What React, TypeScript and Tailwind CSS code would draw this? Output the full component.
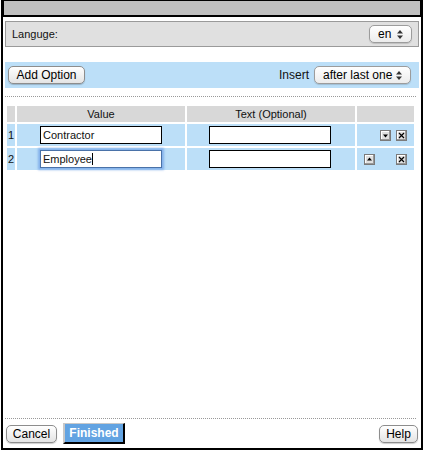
import React from 'react';

const font = { fontFamily: '"Liberation Sans", Arial, sans-serif' };

const Arrows: React.FC = () => (
  <svg width="6" height="9" viewBox="0 0 6 9" className="shrink-0">
    <path d="M3 0 L6 3.5 L0 3.5 Z" fill="#333" />
    <path d="M3 9 L6 5.5 L0 5.5 Z" fill="#333" />
  </svg>
);

const Select: React.FC<{ value: string; className?: string }> = ({ value, className }) => (
  <div
    className={`flex items-center justify-between h-[18px] px-[8px] rounded-[5px] border border-[#9c9c9c] bg-gradient-to-b from-white to-[#ececec] shadow-[0_1px_1px_rgba(0,0,0,0.15)] text-[12px] text-black ${className ?? ''}`}
  >
    <span>{value}</span>
    <Arrows />
  </div>
);

const MacButton: React.FC<{ label: string; className?: string }> = ({ label, className }) => (
  <button
    className={`h-[18px] rounded-[5px] border border-[#8d8d8d] bg-gradient-to-b from-white to-[#e4e4e4] shadow-[0_1px_1px_rgba(0,0,0,0.2)] text-[12px] text-black leading-none ${className ?? ''}`}
  >
    {label}
  </button>
);

const SmallBtn: React.FC<{ kind: 'up' | 'down' | 'x' }> = ({ kind }) => (
  <div className="w-[11px] h-[11px] border border-[#7a7a7a] bg-[#e0e0e0] shadow-[inset_-1px_-1px_0_#9a9a9a,inset_1px_1px_0_#fff] flex items-center justify-center">
    <svg width="7" height="7" viewBox="0 0 7 7">
      {kind === 'up' && <path d="M3.5 1.5 L6 4.5 L1 4.5 Z" fill="#000" />}
      {kind === 'down' && <path d="M1 2.5 L6 2.5 L3.5 5.5 Z" fill="#000" />}
      {kind === 'x' && <path d="M1 1 L6 6 M6 1 L1 6" stroke="#000" strokeWidth="1.2" />}
    </svg>
  </div>
);

const rows = [
  { n: 1, value: 'Contractor', up: false, down: true, focus: false },
  { n: 2, value: 'Employee', up: true, down: false, focus: true },
];

export default function App() {
  return (
    <div className="w-[424px] h-[451px] bg-white text-[#111]" style={font}>
      <div className="ml-[1px] w-[422px] h-[450px] border-x-2 border-b-2 border-black flex flex-col">
        {/* title bar */}
        <div className="h-[17px] bg-[#c0c0c0] border border-black border-b-2" />

        {/* language */}
        <div className="mt-[4px] mx-[2px] h-[26px] bg-[#e0e0e0] border border-[#9a9a9a] flex items-center justify-between pl-[6px] pr-[6px]">
          <span className="text-[11px]">Languge:</span>
          <Select value="en" className="w-[43px]" />
        </div>

        {/* add option row */}
        <div className="mt-[15px] mx-[2px] h-[26px] bg-[#bcdff8] flex items-center justify-between pl-[3px] pr-[8px]">
          <MacButton label="Add Option" className="w-[77px]" />
          <div className="flex items-center gap-[5px]">
            <span className="text-[12px]">Insert</span>
            <Select value="after last one" className="w-[97px]" />
          </div>
        </div>

        <div className="mt-[8px] ml-[2px] mr-[5px] border-t border-dotted border-[#999]" />

        {/* table */}
        <div className="mt-[9px] ml-[4px] grid grid-cols-[8px_168px_168px_57px] gap-[2px] text-[11px]">
          <div className="h-[16px] bg-[#d8d8d8]" />
          <div className="h-[16px] bg-[#d8d8d8] flex items-center justify-center">Value</div>
          <div className="h-[16px] bg-[#d8d8d8] flex items-center justify-center">Text (Optional)</div>
          <div className="h-[16px] bg-[#d8d8d8]" />
          {rows.map((r) => (
            <React.Fragment key={r.n}>
              <div className="h-[22px] bg-[#bcdff8] flex items-center pl-[1px]">{r.n}</div>
              <div className="h-[22px] bg-[#bcdff8] flex items-center pl-[23px]">
                <div
                  className={`w-[122px] h-[18px] bg-white flex items-center pl-[2px] ${
                    r.focus
                      ? 'border border-[#4a72a8] shadow-[0_0_2px_2px_rgba(110,160,230,0.7)]'
                      : 'border border-black'
                  }`}
                >
                  {r.value}
                  {r.focus && <span className="w-px h-[12px] bg-black" />}
                </div>
              </div>
              <div className="h-[22px] bg-[#bcdff8] flex items-center pl-[22px]">
                <div className="w-[122px] h-[18px] bg-white border border-black" />
              </div>
              <div className="h-[22px] bg-[#bcdff8] flex items-center pl-[7px] gap-[5px]">
                <div className="w-[11px]">{r.up && <SmallBtn kind="up" />}</div>
                <div className="w-[11px]">{r.down && <SmallBtn kind="down" />}</div>
                <SmallBtn kind="x" />
              </div>
            </React.Fragment>
          ))}
        </div>

        <div className="flex-1" />

        <div className="ml-[2px] mr-[5px] border-t border-dotted border-[#999]" />
        <div className="h-[29px] flex items-center justify-between pl-[3px] pr-[3px]">
          <div className="flex items-center gap-[6px]">
            <MacButton label="Cancel" className="w-[51px]" />
            <button className="w-[62px] h-[21px] bg-[#62a3e2] border-l-2 border-[#c8c8c8] border-r-2 border-r-black border-b-2 border-b-black border-t border-t-[#c8c8c8] text-white font-bold text-[12px] leading-none">
              Finished
            </button>
          </div>
          <MacButton label="Help" className="w-[39px]" />
        </div>
      </div>
    </div>
  );
}
